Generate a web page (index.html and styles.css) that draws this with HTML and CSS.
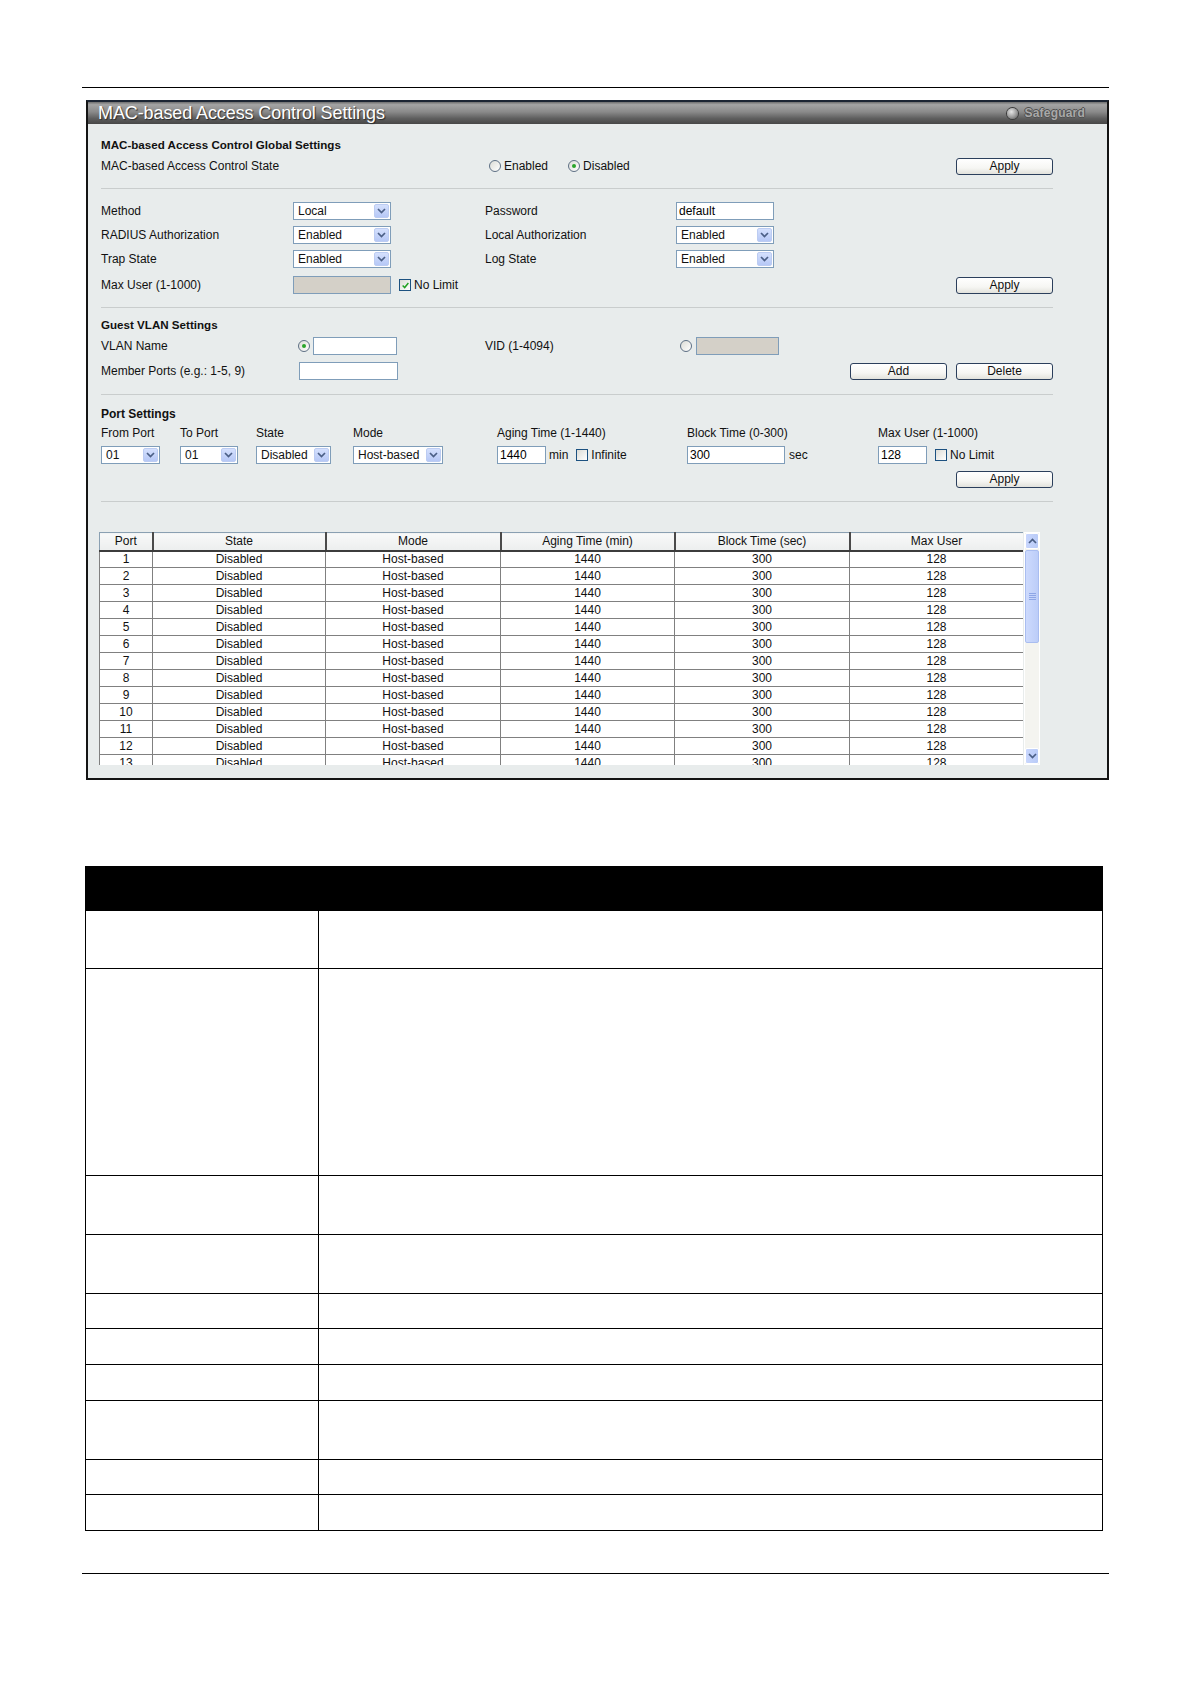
FILE: index.html
```html
<!DOCTYPE html>
<html>
<head>
<meta charset="utf-8">
<title>MAC-based Access Control Settings</title>
<link rel="stylesheet" href="styles.css">
</head>
<body>
<div class="page">
  <div class="rule"></div>

  <div class="panel">
    <div class="titlebar">
      <span class="title">MAC-based Access Control Settings</span>
      <span class="safeguard"><span class="sg-dot"></span><span class="sg-text">Safeguard</span></span>
    </div>

    <div class="panel-body">
      <div class="heading">MAC-based Access Control Global Settings</div>
      <div class="row h24">
        <div class="c1">MAC-based Access Control State</div>
        <div class="c2"></div>
        <div class="c3">
          <span class="radio r-en"></span><span class="opt">Enabled</span>
          <span class="radio on r-dis"></span><span class="opt">Disabled</span>
        </div>
        <div class="c4"><span class="btn push">Apply</span></div>
      </div>

      <div class="sep s10"></div>

      <div class="row h24">
        <div class="c1">Method</div>
        <div class="c2"><div class="sel w98"><span class="sel-text">Local</span><span class="sel-btn"><svg viewBox="0 0 9 6" width="9" height="6"><path d="M1 1 L4.5 4.5 L8 1" fill="none" stroke="#4b5f86" stroke-width="1.7"/></svg></span></div></div>
        <div class="c3">Password</div>
        <div class="c4"><input class="inp w98" type="text" value="default"></div>
      </div>
      <div class="row h24">
        <div class="c1">RADIUS Authorization</div>
        <div class="c2"><div class="sel w98"><span class="sel-text">Enabled</span><span class="sel-btn"><svg viewBox="0 0 9 6" width="9" height="6"><path d="M1 1 L4.5 4.5 L8 1" fill="none" stroke="#4b5f86" stroke-width="1.7"/></svg></span></div></div>
        <div class="c3">Local Authorization</div>
        <div class="c4"><div class="sel w98"><span class="sel-text">Enabled</span><span class="sel-btn"><svg viewBox="0 0 9 6" width="9" height="6"><path d="M1 1 L4.5 4.5 L8 1" fill="none" stroke="#4b5f86" stroke-width="1.7"/></svg></span></div></div>
      </div>
      <div class="row h24">
        <div class="c1">Trap State</div>
        <div class="c2"><div class="sel w98"><span class="sel-text">Enabled</span><span class="sel-btn"><svg viewBox="0 0 9 6" width="9" height="6"><path d="M1 1 L4.5 4.5 L8 1" fill="none" stroke="#4b5f86" stroke-width="1.7"/></svg></span></div></div>
        <div class="c3">Log State</div>
        <div class="c4"><div class="sel w98"><span class="sel-text">Enabled</span><span class="sel-btn"><svg viewBox="0 0 9 6" width="9" height="6"><path d="M1 1 L4.5 4.5 L8 1" fill="none" stroke="#4b5f86" stroke-width="1.7"/></svg></span></div></div>
      </div>
      <div class="row h28">
        <div class="c1">Max User (1-1000)</div>
        <div class="c2 wide">
          <input class="inp w98 dis" type="text" value="" disabled>
          <span class="check on cb-nl"><svg viewBox="0 0 11 11" width="11" height="11"><path d="M2 5.5 L4.5 8 L9 2.5" fill="none" stroke="#21a121" stroke-width="1.8"/></svg></span><span class="opt">No Limit</span>
        </div>
        <div class="c4"><span class="btn push">Apply</span></div>
      </div>

      <div class="sep s8"></div>

      <div class="heading">Guest VLAN Settings</div>
      <div class="row h24">
        <div class="c1">VLAN Name</div>
        <div class="c2"><span class="radio on r-vn"></span><input class="inp w84" type="text" value=""></div>
        <div class="c3">VID (1-4094)</div>
        <div class="c4"><span class="radio r-vid"></span><input class="inp w83 dis" type="text" value="" disabled></div>
      </div>
      <div class="row h26">
        <div class="c1">Member Ports (e.g.: 1-5, 9)</div>
        <div class="c2"><input class="inp w99 mp" type="text" value=""></div>
        <div class="c3"></div>
        <div class="c4"><span class="btn push">Add</span><span class="btn gap9">Delete</span></div>
      </div>

      <div class="sep s10"></div>

      <div class="heading big">Port Settings</div>
      <div class="prow h20">
        <div class="p1">From Port</div>
        <div class="p2">To Port</div>
        <div class="p3">State</div>
        <div class="p4">Mode</div>
        <div class="p5">Aging Time (1-1440)</div>
        <div class="p6">Block Time (0-300)</div>
        <div class="p7">Max User (1-1000)</div>
      </div>
      <div class="prow h24">
        <div class="p1"><div class="sel w59"><span class="sel-text">01</span><span class="sel-btn"><svg viewBox="0 0 9 6" width="9" height="6"><path d="M1 1 L4.5 4.5 L8 1" fill="none" stroke="#4b5f86" stroke-width="1.7"/></svg></span></div></div>
        <div class="p2"><div class="sel w58"><span class="sel-text">01</span><span class="sel-btn"><svg viewBox="0 0 9 6" width="9" height="6"><path d="M1 1 L4.5 4.5 L8 1" fill="none" stroke="#4b5f86" stroke-width="1.7"/></svg></span></div></div>
        <div class="p3"><div class="sel w75"><span class="sel-text">Disabled</span><span class="sel-btn"><svg viewBox="0 0 9 6" width="9" height="6"><path d="M1 1 L4.5 4.5 L8 1" fill="none" stroke="#4b5f86" stroke-width="1.7"/></svg></span></div></div>
        <div class="p4"><div class="sel w90"><span class="sel-text">Host-based</span><span class="sel-btn"><svg viewBox="0 0 9 6" width="9" height="6"><path d="M1 1 L4.5 4.5 L8 1" fill="none" stroke="#4b5f86" stroke-width="1.7"/></svg></span></div></div>
        <div class="p5"><input class="inp w49" type="text" value="1440"><span class="unit">min</span><span class="check cb-inf"></span><span class="opt">Infinite</span></div>
        <div class="p6"><input class="inp w98" type="text" value="300"><span class="unit u4">sec</span></div>
        <div class="p7"><input class="inp w49" type="text" value="128"><span class="check cb-ml"></span><span class="opt">No Limit</span></div>
      </div>
      <div class="row h24">
        <div class="c4 full"><span class="btn push">Apply</span></div>
      </div>

      <div class="sep s10 last"></div>

      <div class="grid-wrap">
        <div class="grid-view">
          <table class="grid">
            <colgroup>
              <col class="g1"><col class="g2"><col class="g3"><col class="g4"><col class="g5"><col class="g6">
            </colgroup>
            <thead>
              <tr><th>Port</th><th>State</th><th>Mode</th><th>Aging Time (min)</th><th>Block Time (sec)</th><th>Max User</th></tr>
            </thead>
            <tbody>
              <tr><td>1</td><td>Disabled</td><td>Host-based</td><td>1440</td><td>300</td><td>128</td></tr>
              <tr><td>2</td><td>Disabled</td><td>Host-based</td><td>1440</td><td>300</td><td>128</td></tr>
              <tr><td>3</td><td>Disabled</td><td>Host-based</td><td>1440</td><td>300</td><td>128</td></tr>
              <tr><td>4</td><td>Disabled</td><td>Host-based</td><td>1440</td><td>300</td><td>128</td></tr>
              <tr><td>5</td><td>Disabled</td><td>Host-based</td><td>1440</td><td>300</td><td>128</td></tr>
              <tr><td>6</td><td>Disabled</td><td>Host-based</td><td>1440</td><td>300</td><td>128</td></tr>
              <tr><td>7</td><td>Disabled</td><td>Host-based</td><td>1440</td><td>300</td><td>128</td></tr>
              <tr><td>8</td><td>Disabled</td><td>Host-based</td><td>1440</td><td>300</td><td>128</td></tr>
              <tr><td>9</td><td>Disabled</td><td>Host-based</td><td>1440</td><td>300</td><td>128</td></tr>
              <tr><td>10</td><td>Disabled</td><td>Host-based</td><td>1440</td><td>300</td><td>128</td></tr>
              <tr><td>11</td><td>Disabled</td><td>Host-based</td><td>1440</td><td>300</td><td>128</td></tr>
              <tr><td>12</td><td>Disabled</td><td>Host-based</td><td>1440</td><td>300</td><td>128</td></tr>
              <tr><td>13</td><td>Disabled</td><td>Host-based</td><td>1440</td><td>300</td><td>128</td></tr>
            </tbody>
          </table>
        </div>
        <div class="vscroll">
          <div class="sb-btn"><svg viewBox="0 0 9 6" width="9" height="6"><path d="M1 5 L4.5 1.5 L8 5" fill="none" stroke="#4b5f86" stroke-width="1.7"/></svg></div>
          <div class="sb-track">
            <div class="sb-thumb"><span class="grip"></span></div>
          </div>
          <div class="sb-btn"><svg viewBox="0 0 9 6" width="9" height="6"><path d="M1 1 L4.5 4.5 L8 1" fill="none" stroke="#4b5f86" stroke-width="1.7"/></svg></div>
        </div>
      </div>
    </div>
  </div>

  <table class="doc">
    <colgroup><col class="dc1"><col></colgroup>
    <tr class="dh"><th colspan="2"></th></tr>
    <tr class="d58"><td></td><td></td></tr>
    <tr class="d209"><td></td><td></td></tr>
    <tr class="d59"><td></td><td></td></tr>
    <tr class="d59"><td></td><td></td></tr>
    <tr class="d36a"><td></td><td></td></tr>
    <tr class="d36"><td></td><td></td></tr>
    <tr class="d36"><td></td><td></td></tr>
    <tr class="d59"><td></td><td></td></tr>
    <tr class="d35"><td></td><td></td></tr>
    <tr class="d36"><td></td><td></td></tr>
  </table>

  <div class="rule foot"></div>
</div>
</body>
</html>
```

FILE: styles.css
```css
html, body {
  margin: 0;
  padding: 0;
  background: #ffffff;
}
body {
  padding-top: 87px;
  font-family: "Liberation Sans", Arial, sans-serif;
  font-size: 12px;
  color: #111;
}
.page {
  width: 1027px;
  margin-left: 82px;
}
.rule {
  border-top: 1px solid #000;
  height: 0;
}
.rule.foot {
  margin-top: 42px;
}

/* panel */
.panel {
  margin-top: 12px;
  margin-left: 4px;
  width: 1023px;
  box-sizing: border-box;
  border: 2px solid #141414;
  border-top-color: #1c2533;
  background: #e8ecec;
}
.titlebar {
  height: 22px;
  display: flex;
  align-items: center;
  justify-content: space-between;
  padding: 0 22px 0 10px;
  background: linear-gradient(to bottom, #6e6e6e 0%, #a4a4a4 12%, #8a8a8a 45%, #5e5e5e 75%, #474747 100%);
}
.title {
  color: #fff;
  font-size: 18px;
  line-height: 22px;
  text-shadow: 1px 1px 1px #2a2a2a;
  letter-spacing: -0.1px;
}
.safeguard {
  display: flex;
  align-items: center;
  gap: 7px;
}
.sg-dot {
  width: 11px;
  height: 11px;
  border-radius: 50%;
  background: radial-gradient(circle at 40% 35%, #e6e6e6 0%, #9a9a9a 55%, #505050 100%);
  box-shadow: 0 0 0 1px #3a3a3a;
}
.sg-text {
  font-size: 12px;
  font-weight: bold;
  color: #a8a8a8;
  letter-spacing: 0.2px;
  text-shadow: 1px 0 0 #505050, -1px 0 0 #505050, 0 1px 0 #505050, 0 -1px 0 #505050;
}
.panel-body {
  padding: 12px 54px 13px 13px;
}

.heading {
  height: 18px;
  line-height: 18px;
  font-size: 11.6px;
  font-weight: bold;
  color: #111;
}
.heading.big {
  font-size: 12px;
}

.row, .prow {
  display: flex;
  align-items: center;
  white-space: nowrap;
}
.h20 { height: 20px; }
.h24 { height: 24px; }
.h26 { height: 26px; }
.h28 { height: 28px; }

.c1 { width: 192px; flex: none; }
.c2 { width: 192px; flex: none; display: flex; align-items: center; }
.c2.wide { width: 383px; }
.c3 { width: 191px; flex: none; display: flex; align-items: center; }
.c4 { flex: 1; display: flex; align-items: center; }
.c4.full { width: 952px; }

.p1 { width: 79px; flex: none; display: flex; align-items: center; }
.p2 { width: 76px; flex: none; display: flex; align-items: center; }
.p3 { width: 97px; flex: none; display: flex; align-items: center; }
.p4 { width: 144px; flex: none; display: flex; align-items: center; }
.p5 { width: 190px; flex: none; display: flex; align-items: center; }
.p6 { width: 191px; flex: none; display: flex; align-items: center; }
.p7 { flex: 1; display: flex; align-items: center; }

.sep {
  height: 0;
  border-top: 1px solid #c9cdcd;
}
.sep.s10 { margin: 10px 0; }
.sep.s8 { margin: 8px 0; }
.sep.last { margin-bottom: 30px; }

/* select */
.sel {
  height: 18px;
  box-sizing: border-box;
  border: 1px solid #7f9db9;
  background: #fff;
  display: flex;
  align-items: center;
  justify-content: space-between;
  padding: 0 1px 0 4px;
}
.sel-text {
  font-size: 12px;
  line-height: 16px;
}
.sel-btn {
  width: 15px;
  height: 14px;
  box-sizing: border-box;
  border: 1px solid #bcccf2;
  border-radius: 2px;
  background: linear-gradient(to bottom, #d4e0fd, #b6c8f6);
  display: flex;
  align-items: center;
  justify-content: center;
}
.w98 { width: 98px; }
.w99 { width: 99px; }
.w84 { width: 84px; }
.w83 { width: 83px; }
.w90 { width: 90px; }
.w75 { width: 75px; }
.w59 { width: 59px; }
.w58 { width: 58px; }
.w49 { width: 49px; }

/* inputs */
.inp {
  height: 18px;
  box-sizing: border-box;
  border: 1px solid #7f9db9;
  background: #fff;
  margin: 0;
  padding: 0 2px;
  font-family: "Liberation Sans", Arial, sans-serif;
  font-size: 12px;
  color: #000;
  outline: none;
}
.inp.dis {
  background: #d4d0c8;
}
.inp.mp { margin-left: 6px; }

/* radio */
.radio {
  width: 12px;
  height: 12px;
  box-sizing: border-box;
  border-radius: 50%;
  border: 1px solid #5d6f84;
  background: linear-gradient(135deg, #dcdcd6, #ffffff);
  display: inline-flex;
  align-items: center;
  justify-content: center;
  flex: none;
}
.radio.on::after {
  content: "";
  width: 4px;
  height: 4px;
  border-radius: 50%;
  background: #2aa52a;
}
.r-en { margin-left: 4px; }
.r-dis { margin-left: 20px; }
.r-vn { margin-left: 5px; margin-right: 3px; }
.r-vid { margin-left: 4px; margin-right: 4px; }
.opt { margin-left: 3px; }

/* checkbox */
.check {
  width: 12px;
  height: 12px;
  box-sizing: border-box;
  border: 1px solid #1c5180;
  background: linear-gradient(135deg, #dcdcd6, #ffffff);
  display: inline-flex;
  align-items: center;
  justify-content: center;
  flex: none;
}
.check svg { width: 9px; height: 9px; }
.cb-nl { margin-left: 8px; }
.cb-inf { margin-left: 8px; }
.cb-ml { margin-left: 8px; }
.unit { margin-left: 3px; }
.unit.u4 { margin-left: 4px; }

/* buttons */
.btn {
  width: 97px;
  height: 17px;
  box-sizing: border-box;
  border: 1px solid #2b3f5c;
  border-radius: 3px;
  background: linear-gradient(to bottom, #ffffff 0%, #f6f6f3 60%, #e2e2dc 100%);
  display: inline-flex;
  align-items: center;
  justify-content: center;
  font-size: 12px;
  color: #111;
  flex: none;
}
.btn.push { margin-left: auto; }
.btn.gap9 { margin-left: 9px; }

/* status grid */
.grid-wrap {
  display: flex;
  margin-left: -2px;
  width: 941px;
  height: 233px;
}
.grid-view {
  width: 924px;
  height: 233px;
  overflow: hidden;
  flex: none;
}
.grid {
  width: 924px;
  border-collapse: collapse;
  table-layout: fixed;
}
.g1 { width: 53px; }
.g2 { width: 173px; }
.g3 { width: 175px; }
.g4 { width: 174px; }
.g5 { width: 175px; }
.g6 { width: 174px; }
.grid th {
  height: 18px;
  padding: 0;
  box-sizing: border-box;
  font-weight: normal;
  font-size: 12px;
  text-align: center;
  background: linear-gradient(to bottom, #f8f9f9, #eceeee);
  border-top: 1px solid #8aa0b2;
  border-left: 1px solid #8aa0b2;
  border-right: 2px solid #4a4a4a;
  border-bottom: 2px solid #3c3c3c;
}
.grid td {
  height: 17px;
  padding: 0;
  box-sizing: border-box;
  text-align: center;
  font-size: 12px;
  line-height: 15px;
  background: #fff;
  border: 1px solid #808080;
}
.vscroll {
  width: 16px;
  margin-left: 1px;
  height: 233px;
  display: flex;
  flex-direction: column;
  background: #f4f4f0;
  box-sizing: border-box;
  border: 1px solid #ffffff;
}
.sb-btn {
  height: 16px;
  flex: none;
  box-sizing: border-box;
  border: 1px solid #ffffff;
  border-radius: 2px;
  background: linear-gradient(to right, #c8d6fd, #b9cbf7);
  display: flex;
  align-items: center;
  justify-content: center;
}
.sb-track {
  flex: 1;
  padding-top: 1px;
}
.sb-thumb {
  height: 93px;
  box-sizing: border-box;
  border: 1px solid #a9bdf0;
  border-radius: 2px;
  background: linear-gradient(to right, #cddafd, #bccdf8);
  display: flex;
  align-items: center;
  justify-content: center;
}
.grip {
  width: 7px;
  height: 7px;
  background: repeating-linear-gradient(to bottom, #8ea6e6 0, #8ea6e6 1px, transparent 1px, transparent 2px);
}

/* doc table */
.doc {
  margin-top: 86px;
  margin-left: 3px;
  width: 1018px;
  border-collapse: collapse;
  table-layout: fixed;
}
.doc col.dc1 { width: 233px; }
.doc th {
  background: #000;
  height: 43px;
  padding: 0;
  border: 1px solid #000;
}
.doc td {
  padding: 0;
  border: 1px solid #000;
  background: #fff;
}
.d58 td { height: 57px; }
.d209 td { height: 206px; }
.d59 td { height: 58px; }
.d36a td { height: 34px; }
.d36 td { height: 35px; }
.d35 td { height: 34px; }
```
